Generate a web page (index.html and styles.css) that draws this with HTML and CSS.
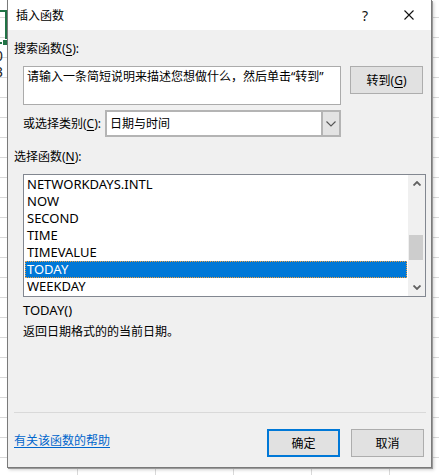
FILE: index.html
```html
<!DOCTYPE html>
<html lang="zh-CN">
<head>
<meta charset="utf-8">
<title>插入函数</title>
<link rel="stylesheet" href="styles.css">
</head>
<body>
<div class="cellsel"><span class="handle"></span></div>
<div class="nums">0<br>3</div>
<div class="dialog">
  <div class="titlebar">
    <span class="title">插入函数</span>
    <span class="tbtn help">?</span>
    <span class="tbtn close"><svg width="10" height="10" viewBox="0 0 10 10"><path d="M0.5 0.5L9.5 9.5M9.5 0.5L0.5 9.5" stroke="#111" stroke-width="1.1" fill="none"/></svg></span>
  </div>
  <div class="body">
    <div class="lbl">搜索函数(<u>S</u>):</div>
    <div class="row1">
      <div class="search">请输入一条简短说明来描述您想做什么，然后单击“转到”</div>
      <div class="btn go">转到(<u>G</u>)</div>
    </div>
    <div class="row2">
      <div class="lbl cat">或选择类别(<u>C</u>):</div>
      <div class="combo">
        <span class="ctext">日期与时间</span>
        <span class="cbtn"><svg width="10" height="6" viewBox="0 0 10 6"><path d="M0.5 0.5L5 5L9.5 0.5" stroke="#555" stroke-width="1.1" fill="none"/></svg></span>
      </div>
    </div>
    <div class="lbl lbl2">选择函数(<u>N</u>):</div>
    <div class="list">
      <div class="items">
        <div class="item">NETWORKDAYS.INTL</div>
        <div class="item">NOW</div>
        <div class="item">SECOND</div>
        <div class="item">TIME</div>
        <div class="item">TIMEVALUE</div>
        <div class="item sel">TODAY</div>
        <div class="item">WEEKDAY</div>
      </div>
      <div class="sb">
        <div class="arrow"><svg width="8" height="5" viewBox="0 0 8 5"><path d="M0.5 4.5L4 1L7.5 4.5" stroke="#606060" stroke-width="1.8" fill="none"/></svg></div>
        <div class="track"><div class="thumb"></div></div>
        <div class="arrow"><svg width="8" height="5" viewBox="0 0 8 5"><path d="M0.5 0.5L4 4L7.5 0.5" stroke="#606060" stroke-width="1.8" fill="none"/></svg></div>
      </div>
    </div>
    <div class="sig">TODAY()</div>
    <div class="desc">返回日期格式的的当前日期。</div>
    <div class="sep"></div>
    <div class="foot">
      <a class="link" href="#">有关该函数的帮助</a>
      <div class="btn ok">确定</div>
      <div class="btn cancel">取消</div>
    </div>
  </div>
</div>
</body>
</html>
```
FILE: styles.css
```css
html, body {
  margin: 0;
  padding: 0;
}
body {
  position: relative;
  width: 439px;
  height: 475px;
  overflow: hidden;
  font-family: "Noto Sans", "Noto Sans CJK SC", sans-serif;
  font-size: 12px;
  color: #000;
  background-color: #fff;
  background-image:
    repeating-linear-gradient(to bottom, transparent 0 17px, #d9d9d9 17px 18px, transparent 18px 20px),
    repeating-linear-gradient(to right, transparent 0 77px, #d9d9d9 77px 78px, transparent 78px 72px);
}
.cellsel {
  position: absolute;
  top: 10px;
  left: -59px;
  width: 66px;
  height: 34px;
  box-sizing: border-box;
  border: 2px solid #217346;
}
.handle {
  position: absolute;
  right: -4px;
  bottom: -4px;
  width: 5px;
  height: 5px;
  background: #217346;
  border: 1px solid #fff;
}
.nums {
  position: absolute;
  top: 48px;
  left: -5px;
  font-family: "Liberation Sans", sans-serif;
  font-size: 14px;
  line-height: 16px;
  color: #222;
}
.dialog {
  position: relative;
  z-index: 1;
  margin-left: 7px;
  width: 425px;
  height: 468px;
  box-sizing: border-box;
  border: 1px solid #7a7a7a;
  border-top: none;
  background: #f0f0f0;
  box-shadow: 1px 1px 0 #9a9a9a, 2px 2px 3px rgba(0, 0, 0, 0.18);
  display: flex;
  flex-direction: column;
}
.titlebar {
  height: 30px;
  background: #fff;
  display: flex;
  align-items: center;
  padding-left: 8px;
}
.title {
  flex: 1;
  line-height: 17px;
  font-size: 12px;
}
.tbtn {
  width: 44px;
  height: 30px;
  display: flex;
  align-items: center;
  justify-content: center;
}
.help {
  font-family: "Noto Sans", sans-serif;
  font-size: 14px;
  color: #111;
}
.body {
  flex: 1;
  display: flex;
  flex-direction: column;
  padding: 10px 7px 10px 6px;
}
.lbl {
  line-height: 17px;
  height: 17px;
  white-space: nowrap;
}
u {
  text-decoration: underline;
  text-underline-offset: 2px;
}
.row1 {
  display: flex;
  margin-top: 9px;
  margin-left: 9px;
}
.search {
  width: 318px;
  height: 39px;
  box-sizing: border-box;
  border: 1px solid #ababab;
  background: #fff;
  padding: 1px 3px;
  line-height: 17px;
  white-space: nowrap;
  overflow: hidden;
}
.btn {
  width: 73px;
  height: 28px;
  box-sizing: border-box;
  border: 1px solid #adadad;
  background: #e1e1e1;
  display: flex;
  align-items: center;
  justify-content: center;
  line-height: 17px;
}
.go {
  margin-left: 9px;
}
.row2 {
  display: flex;
  align-items: center;
  margin-top: 5px;
  margin-left: 9px;
}
.cat {
  width: 82px;
}
.combo {
  width: 236px;
  height: 27px;
  box-sizing: border-box;
  border: 2px solid #b4b4b4;
  background: #fff;
  display: flex;
  align-items: stretch;
}
.ctext {
  flex: 1;
  padding-left: 3px;
  display: flex;
  align-items: center;
  line-height: 17px;
}
.cbtn {
  width: 16px;
  border-left: 2px solid #b4b4b4;
  background: #e3e3e3;
  display: flex;
  align-items: center;
  justify-content: center;
}
.lbl2 {
  margin-top: 11px;
}
.list {
  margin-top: 9px;
  margin-left: 9px;
  width: 403px;
  height: 123px;
  box-sizing: border-box;
  border: 1px solid #828790;
  background: #fff;
  display: flex;
}
.items {
  flex: 1;
  padding: 1px 1px 0 1px;
}
.item {
  height: 17px;
  line-height: 17px;
  padding-left: 2px;
  font-size: 13px;
  white-space: nowrap;
}
.item.sel {
  background: #0078d7;
  color: #fff;
  outline: 1px dotted #f0a040;
  outline-offset: -1px;
}
.sb {
  width: 17px;
  background: #f0f0f0;
  display: flex;
  flex-direction: column;
}
.arrow {
  height: 17px;
  display: flex;
  align-items: center;
  justify-content: center;
}
.track {
  flex: 1;
}
.thumb {
  margin: 43px 2px 0 1px;
  height: 25px;
  background: #cdcdcd;
}
.sig {
  margin-top: 5px;
  margin-left: 9px;
  font-size: 13px;
  line-height: 17px;
}
.desc {
  margin-top: 4px;
  margin-left: 9px;
  line-height: 17px;
}
.sep {
  margin-top: auto;
  margin-right: -2px;
  height: 1px;
  background: #d9d9d9;
}
.foot {
  display: flex;
  align-items: flex-start;
  margin-top: 16px;
}
.link {
  margin-top: 3px;
  margin-right: auto;
  line-height: 17px;
  color: #0066cc;
  text-decoration: underline;
  text-underline-offset: 2px;
}
.ok {
  border: 2px solid #0078d7;
}
.cancel {
  margin-left: 11px;
}
```
